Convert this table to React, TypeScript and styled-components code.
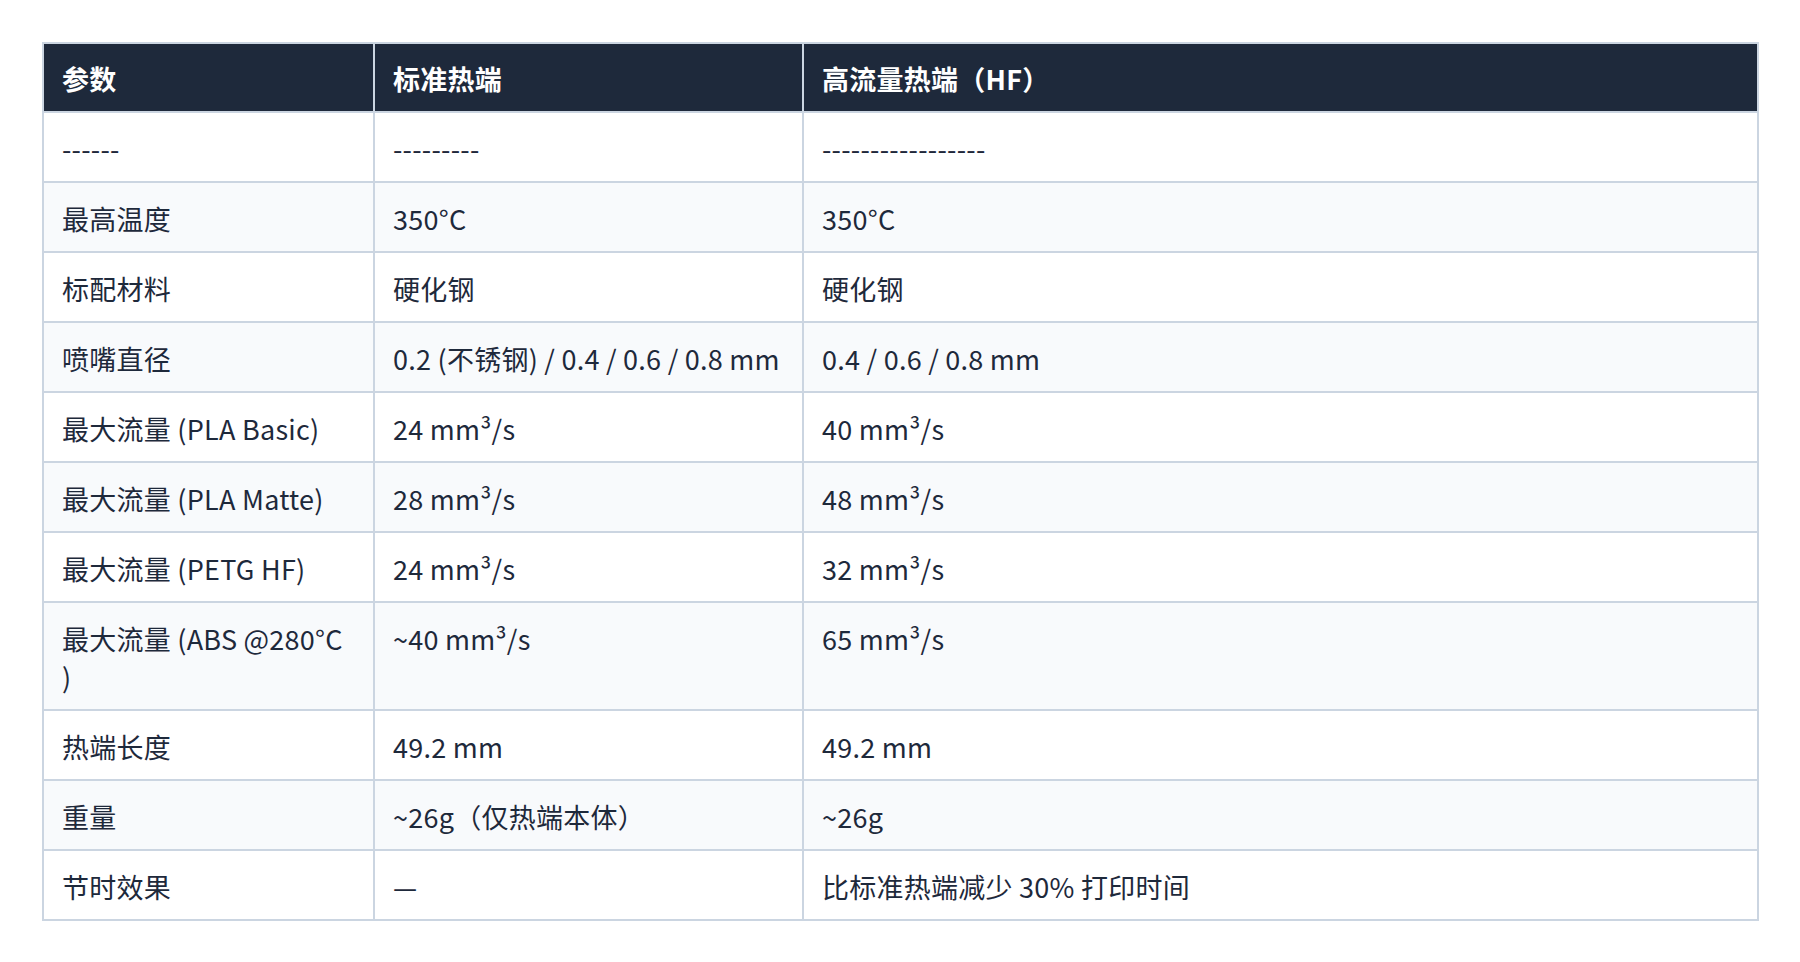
import React from 'react';
import styled, { createGlobalStyle } from 'styled-components';

const GlobalStyle = createGlobalStyle`
  html, body {
    margin: 0;
    padding: 0;
    background: #ffffff;
  }
  body {
    font-family: "Noto Sans CJK SC", "Noto Sans", sans-serif;
    color: #1e293b;
  }
`;

const Page = styled.div`
  padding: 42px;
`;

const Table = styled.table`
  width: 1717px;
  border-collapse: separate;
  border-spacing: 0;
  table-layout: fixed;
  border-left: 2px solid #cbd5e1;
  border-top: 2px solid #cbd5e1;
  font-size: 27px;
  line-height: 38px;
  letter-spacing: 0.25px;
`;

const Col = styled.col<{ $w: number }>`
  width: ${({ $w }) => $w}px;
`;

const HeadCell = styled.th`
  box-sizing: border-box;
  padding: 16px 18px 13px;
  background: #1e293b;
  color: #ffffff;
  font-weight: 700;
  text-align: left;
  border-right: 2px solid #cbd5e1;
  border-bottom: 2px solid #cbd5e1;
`;

const Row = styled.tr`
  background: #ffffff;
  &:nth-child(even) {
    background: #f8fafc;
  }
`;

const Cell = styled.td`
  box-sizing: border-box;
  padding: 17px 18px 13px;
  vertical-align: top;
  font-weight: 400;
  border-right: 2px solid #cbd5e1;
  border-bottom: 2px solid #cbd5e1;
`;

const rows: [string, string, string][] = [
  ['------', '---------', '-----------------'],
  ['最高温度', '350°C', '350°C'],
  ['标配材料', '硬化钢', '硬化钢'],
  ['喷嘴直径', '0.2 (不锈钢) / 0.4 / 0.6 / 0.8 mm', '0.4 / 0.6 / 0.8 mm'],
  ['最大流量 (PLA Basic)', '24 mm³/s', '40 mm³/s'],
  ['最大流量 (PLA Matte)', '28 mm³/s', '48 mm³/s'],
  ['最大流量 (PETG HF)', '24 mm³/s', '32 mm³/s'],
  ['最大流量 (ABS @280°C )', '~40 mm³/s', '65 mm³/s'],
  ['热端长度', '49.2 mm', '49.2 mm'],
  ['重量', '~26g（仅热端本体）', '~26g'],
  ['节时效果', '—', '比标准热端减少 30% 打印时间'],
];

const App: React.FC = () => {
  return (
    <>
      <GlobalStyle />
      <Page>
        <Table>
          <colgroup>
            <Col $w={331} />
            <Col $w={429} />
            <Col $w={955} />
          </colgroup>
          <thead>
            <tr>
              <HeadCell>参数</HeadCell>
              <HeadCell>标准热端</HeadCell>
              <HeadCell>高流量热端（HF）</HeadCell>
            </tr>
          </thead>
          <tbody>
            {rows.map((r, i) => (
              <Row key={i}>
                <Cell>{r[0]}</Cell>
                <Cell>{r[1]}</Cell>
                <Cell>{r[2]}</Cell>
              </Row>
            ))}
          </tbody>
        </Table>
      </Page>
    </>
  );
};

export default App;
